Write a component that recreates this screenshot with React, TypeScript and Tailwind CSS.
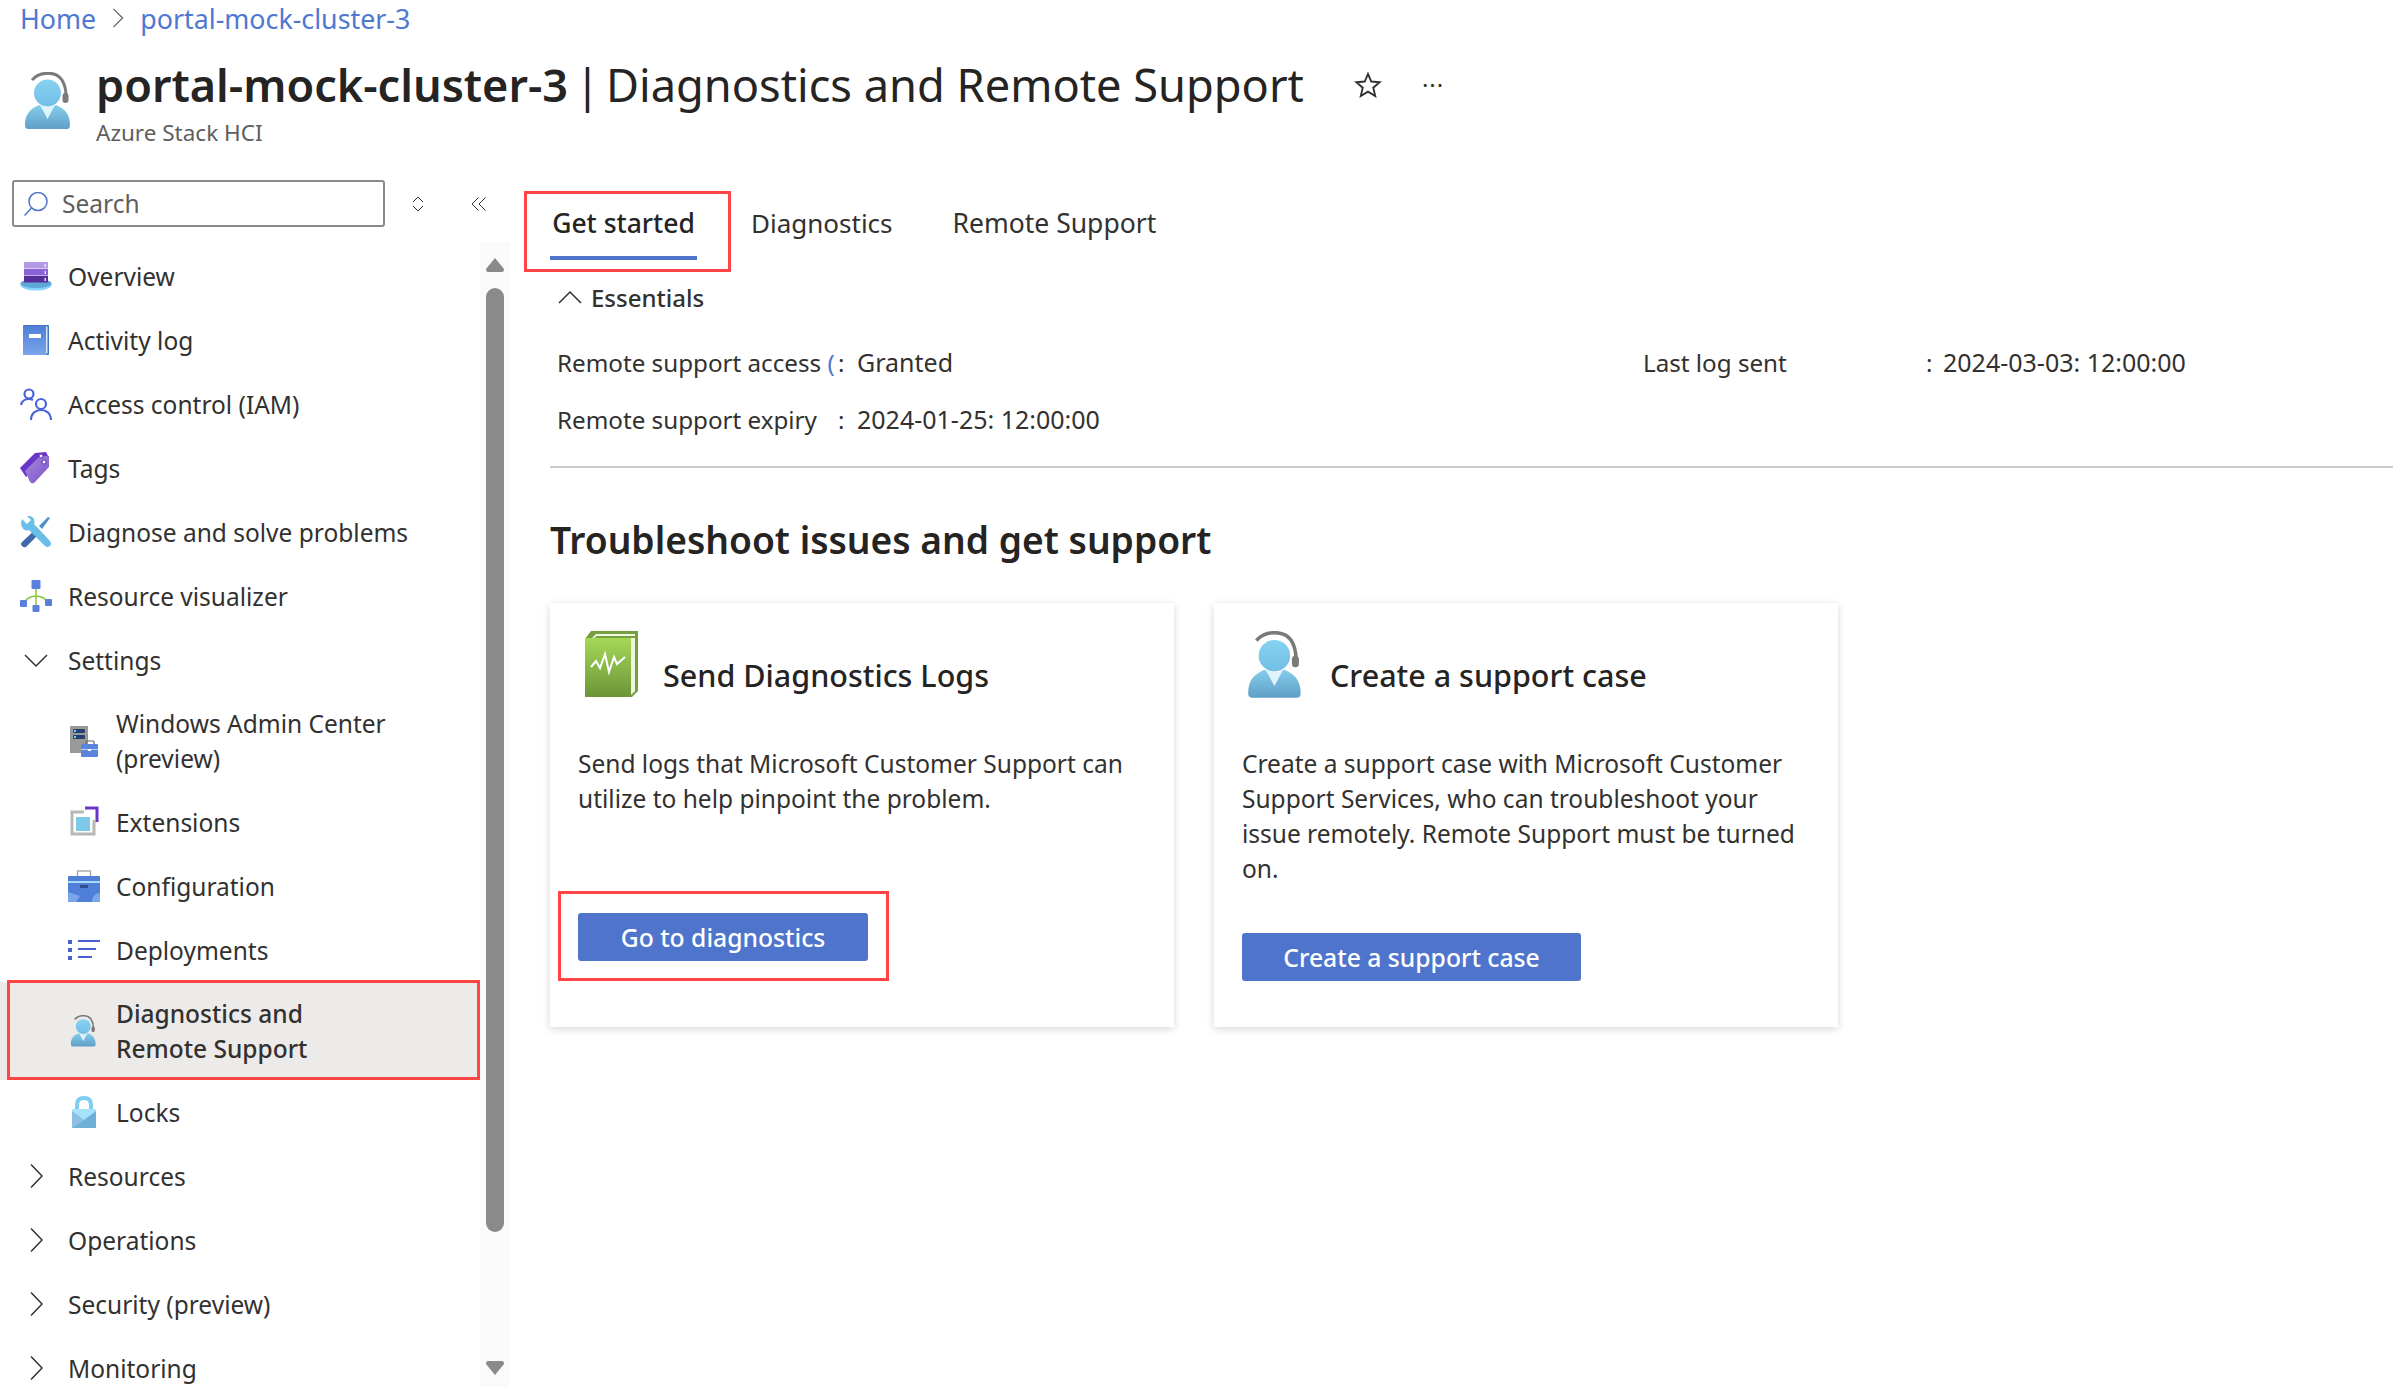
import React from "react";

type IconProps = { className?: string };

// person with headset, used in the header, the menu and the card
const SupportIcon = ({ className }: IconProps) => (
  <svg viewBox="0 0 48 58" className={className}>
    <defs>
      <linearGradient id="sp-head" x1="0" y1="0" x2="0" y2="1">
        <stop offset="0" stopColor="#86d2f2" />
        <stop offset="1" stopColor="#72bfe6" />
      </linearGradient>
      <linearGradient id="sp-body" x1="0" y1="0" x2="0" y2="1">
        <stop offset="0" stopColor="#86cdec" />
        <stop offset="1" stopColor="#5e9fc6" />
      </linearGradient>
    </defs>
    <path d="M8 8 C16 -1 32 -1 38 8 C41 13 42 18 42 24" fill="none" stroke="#7a7a7a" strokeWidth="3" />
    <rect x="38.5" y="21" width="6" height="10" rx="3" fill="#7a7a7a" />
    <circle cx="23.5" cy="21" r="13.5" fill="url(#sp-head)" />
    <path d="M1 53 C1 42 6 37 15 33 Q24 38 32 33 C41 37 46 42 46 53 Q46 57 43 57 L4 57 Q1 57 1 53Z" fill="url(#sp-body)" />
    <path d="M16 33 Q24 37 31 33 L23.5 47Z" fill="#e0f3fb" />
  </svg>
);

const BookIcon = ({ className }: IconProps) => (
  <svg viewBox="0 0 54 66" className={className}>
    <defs>
      <linearGradient id="bk-green" x1="0" y1="0" x2="0" y2="1">
        <stop offset="0" stopColor="#a5d857" />
        <stop offset="1" stopColor="#6c9438" />
      </linearGradient>
    </defs>
    <path d="M0 8 L6 0 L53 0 L53 60 L47 66 L0 66Z" fill="#76a03d" />
    <path d="M46 7 H50 V60 L46 64Z" fill="#eef6e0" />
    <rect x="0" y="7" width="46" height="59" fill="url(#bk-green)" />
    <path d="M7 7 L11 3 H50 V5 H12 L9 7Z" fill="#eef6e0" />
    <path d="M6 38 L11 32 L15 39 L20 25 L24 43 L29 28 L32 35 L40 28" transform="translate(0 -2)" fill="none" stroke="#fff" strokeWidth="2" />
  </svg>
);

const OverviewIcon = () => (
  <svg viewBox="0 0 32 32" className="h-8 w-8">
    <ellipse cx="16" cy="25" rx="15.5" ry="5.5" fill="#83d3fb" />
    <ellipse cx="16" cy="23.5" rx="15.5" ry="4.5" fill="#5ea7d6" />
    <rect x="4" y="2" width="24" height="6.5" fill="#b39ae6" />
    <rect x="4" y="9" width="24" height="6.5" fill="#8b63d9" />
    <rect x="4" y="16" width="24" height="6.5" fill="#553099" />
    <rect x="24.5" y="4" width="1.5" height="3" fill="#e6e0f5" />
    <rect x="24.5" y="11" width="1.5" height="3" fill="#e6e0f5" />
    <rect x="24.5" y="18" width="1.5" height="3" fill="#e6e0f5" />
  </svg>
);

const LogIcon = () => (
  <svg viewBox="0 0 32 32" className="h-8 w-8">
    <defs>
      <linearGradient id="log-blue" x1="0" y1="0" x2="0" y2="1">
        <stop offset="0" stopColor="#4f7fd6" />
        <stop offset="1" stopColor="#7ba6ea" />
      </linearGradient>
    </defs>
    <rect x="3" y="1" width="26" height="30" rx="1" fill="#4a74c4" />
    <path d="M26 2.5 H27.5 V29 L26 30Z" fill="#dbe7f8" />
    <rect x="3" y="2" width="23" height="29" fill="url(#log-blue)" />
    <rect x="9" y="10" width="12" height="4" fill="#fff" />
  </svg>
);

const IamIcon = () => (
  <svg viewBox="0 0 32 32" className="h-8 w-8" fill="none" stroke="#4a63d8" strokeWidth="2.2">
    <circle cx="9" cy="6" r="4.5" />
    <path d="M1 17 C2 12 6 11 9 11 C11 11 12 11.500 13 12" />
    <circle cx="21" cy="16" r="5" />
    <path d="M11 32 C11 25 16 22 21 22 C26 22 31 25 31 32" />
  </svg>
);

const TagIcon = () => (
  <svg viewBox="0 0 32 32" className="h-8 w-8">
    <defs>
      <linearGradient id="tag-p" x1="0" y1="0" x2="1" y2="1">
        <stop offset="0" stopColor="#a78bdc" />
        <stop offset="1" stopColor="#7a52c9" />
      </linearGradient>
    </defs>
    <path d="M0 16 L15 1 L26 0 L28 4 L6 25Z" fill="#6a35c9" />
    <path d="M5 19 L20 4 L29 4 L29 15 L14 31 Q12 32 10 30Z" fill="url(#tag-p)" />
    <circle cx="21" cy="4" r="2" fill="#fff" stroke="#5c2eb0" />
    <circle cx="24" cy="10" r="2" fill="#fff" stroke="#5c2eb0" />
  </svg>
);

const WrenchIcon = () => (
  <svg viewBox="0 0 32 32" className="h-8 w-8">
    <path d="M2 26 L17 12 L21 16 L6 31 Q4 32 2 30 Q0 28 2 26Z" fill="#3f6aa8" />
    <path d="M19 10 L28 1 L30 2 L22 13Z" fill="#4f8fc7" />
    <path d="M2 3 L7 8 L11 4 L7 0 C12 -1 16 3 14 8 L30 25 Q32 28 30 30 Q27 32 25 30 L9 14 C4 16 -1 10 2 3Z" fill="#68bfe8" />
  </svg>
);

const VisualizerIcon = () => (
  <svg viewBox="0 0 32 32" className="h-8 w-8">
    <path d="M16 9 V26 M5 24 C5 18 12 16 16 16 C20 16 27 18 27 24" fill="none" stroke="#8cc63f" strokeWidth="1.5" />
    <rect x="11.500" y="0" width="9" height="9" rx="1" fill="#5b80dc" />
    <rect x="0" y="20" width="7" height="7" rx="1" fill="#5b80dc" />
    <rect x="25" y="19" width="7" height="7" rx="1" fill="#5b80dc" />
    <rect x="12.500" y="25" width="7" height="7" rx="1" fill="#5b80dc" />
  </svg>
);

const AdminCenterIcon = () => (
  <svg viewBox="0 0 32 32" className="h-8 w-8">
    <rect x="2" y="1" width="18" height="27" fill="#9a9a9a" />
    <rect x="5" y="4" width="12" height="4" rx="1" fill="#24406e" />
    <rect x="5" y="10" width="12" height="4" rx="1" fill="#24406e" />
    <rect x="6" y="5" width="2" height="2" fill="#7fd0ee" />
    <rect x="6" y="11" width="2" height="2" fill="#7fd0ee" />
    <rect x="18" y="16" width="8" height="5" rx="1" fill="none" stroke="#666" strokeWidth="1.2" />
    <rect x="13" y="19" width="17" height="13" rx="1" fill="#5b84dc" />
    <rect x="13" y="24" width="17" height="1" fill="#b6d4f5" />
    <rect x="20" y="24" width="3" height="2" fill="#fff" />
  </svg>
);

const ExtensionsIcon = () => (
  <svg viewBox="0 0 32 32" className="h-8 w-8">
    <path d="M26 14 V28 H4 V6 H16" fill="none" stroke="#b8b8b8" strokeWidth="3" />
    <path d="M17 2 H29 V16" fill="none" stroke="#6a35c9" strokeWidth="3" />
    <rect x="8" y="11" width="14" height="14" fill="#7cc9ea" />
  </svg>
);

const ConfigIcon = () => (
  <svg viewBox="0 0 32 32" className="h-8 w-8">
    <rect x="9.500" y="1" width="13" height="7" fill="none" stroke="#aaa" strokeWidth="1.5" />
    <rect x="0" y="6" width="32" height="26" rx="1" fill="#4f7fd6" />
    <rect x="0" y="11" width="32" height="2" fill="#a8dcf5" />
    <path d="M0 22 L12 26 L8 32 H1 Q0 32 0 31Z M24 32 C24 27 27 23 32 23 V31 Q32 32 31 32Z" fill="#7ba6ea" />
    <rect x="12" y="15" width="8" height="3" fill="#2e4f8f" />
  </svg>
);

const DeploymentsIcon = () => (
  <svg viewBox="0 0 32 20" className="h-5 w-8" fill="#4a5fd6">
    <rect x="0" y="0" width="4" height="4" />
    <rect x="0" y="8" width="4" height="4" />
    <rect x="0" y="16" width="4" height="4" />
    <rect x="10" y="0" width="22" height="2" />
    <rect x="10" y="8" width="18" height="2" />
    <rect x="10" y="16" width="14" height="2" />
  </svg>
);

const LockIcon = () => (
  <svg viewBox="0 0 32 32" className="h-8 w-8">
    <path d="M9 15 V9 C9 4 12 2 16 2 C20 2 23 4 23 9 V15" fill="none" stroke="#7fcdf0" strokeWidth="4" />
    <rect x="4" y="13" width="24" height="19" rx="1" fill="#a5e3fb" />
    <path d="M4 15 L16 24 L4 32Z" fill="#8fbfe0" />
    <path d="M28 15 L16 24 L4 32 H28Z" fill="#6fb0d8" />
  </svg>
);

const Chevron = ({ d, className }: { d: string; className?: string }) => (
  <svg viewBox="0 0 24 24" className={className} fill="none" stroke="#323130" strokeWidth="1.5">
    <path d={d} />
  </svg>
);

const navItemClass = "flex h-16 items-center text-[#323130]";

const TopItem = ({ icon, label }: { icon: React.ReactNode; label: string }) => (
  <div className={navItemClass}>
    <div className="ml-5 flex w-12 items-center">{icon}</div>
    <span>{label}</span>
  </div>
);

const SubItem = ({ icon, label }: { icon: React.ReactNode; label: string }) => (
  <div className={navItemClass}>
    <div className="ml-[68px] flex w-12 items-center">{icon}</div>
    <span>{label}</span>
  </div>
);

const Group = ({ label, open }: { label: string; open?: boolean }) => (
  <div className={navItemClass}>
    <div className="ml-6 flex w-11 items-center">
      {open ? (
        <Chevron d="M1 7 L12 18 L23 7" className="h-6 w-6" />
      ) : (
        <Chevron d="M7 0.500 L18 12 L7 23.500" className="h-6 w-6" />
      )}
    </div>
    <span>{label}</span>
  </div>
);

function Sidebar() {
  return (
    <aside className="flex w-[510px] shrink-0 flex-col">
      <div className="mt-[10px] flex items-center">
        <div className="ml-3 flex h-[47px] w-[373px] items-center rounded-[3px] border-2 border-[#8a8a8a] pl-[10px] text-[#605e5c]">
          <svg viewBox="0 0 24 24" className="h-6 w-6" fill="none" stroke="#4f74cc" strokeWidth="1.5">
            <circle cx="14" cy="9.500" r="9" />
            <path d="M7.500 16 L0.500 23.500" />
          </svg>
          <span className="ml-[14px]">Search</span>
        </div>
        <svg viewBox="0 0 14 16" className="ml-[26px] h-4 w-[14px]" fill="none" stroke="#323130" strokeWidth="1">
          <path d="M2 6 L7 1 L12 6 M2 10 L7 15 L12 10" />
        </svg>
        <svg viewBox="0 0 16 14" className="ml-[46px] h-[14px] w-4" fill="none" stroke="#323130" strokeWidth="1">
          <path d="M7.500 0.500 L1 7 L7.500 13.500 M14.500 0.500 L8 7 L14.500 13.500" />
        </svg>
      </div>
      <div className="mt-[15px] flex min-h-0 flex-1">
        <nav className="w-[480px] pt-[2px]">
          <TopItem icon={<OverviewIcon />} label="Overview" />
          <TopItem icon={<LogIcon />} label="Activity log" />
          <TopItem icon={<IamIcon />} label="Access control (IAM)" />
          <TopItem icon={<TagIcon />} label="Tags" />
          <TopItem icon={<WrenchIcon />} label="Diagnose and solve problems" />
          <TopItem icon={<VisualizerIcon />} label="Resource visualizer" />
          <Group label="Settings" open />
          <div className="flex h-[98px] items-center text-[#323130]">
            <div className="ml-[68px] flex w-12 items-center"><AdminCenterIcon /></div>
            <span className="leading-[35px]">Windows Admin Center<br />(preview)</span>
          </div>
          <SubItem icon={<ExtensionsIcon />} label="Extensions" />
          <SubItem icon={<ConfigIcon />} label="Configuration" />
          <SubItem icon={<DeploymentsIcon />} label="Deployments" />
          <div className="relative flex h-[98px] items-center bg-[#edebe9] font-medium text-[#323130]">
            <div className="ml-[68px] flex w-12 items-center"><SupportIcon className="ml-[2px] h-8 w-[27px]" /></div>
            <span className="leading-[35px]">Diagnostics and<br />Remote Support</span>
            <div className="absolute -top-[2px] right-0 bottom-0 left-[7px] border-[3px] border-[#ff4545]" />
          </div>
          <SubItem icon={<LockIcon />} label="Locks" />
          <Group label="Resources" />
          <Group label="Operations" />
          <Group label="Security (preview)" />
          <Group label="Monitoring" />
        </nav>
        <div className="flex h-[1145px] w-[30px] flex-col items-center bg-[#fafafa] pt-4">
          <svg viewBox="0 0 18 14" className="h-[14px] w-[18px]" fill="#8a8a8a">
            <path d="M9 0 L18 11 Q18 14 16 14 H2 Q0 14 0 11Z" />
          </svg>
          <div className="mt-4 h-[944px] w-[18px] rounded-full bg-[#8a8a8a]" />
          <svg viewBox="0 0 18 14" className="mt-[129px] h-[14px] w-[18px]" fill="#8a8a8a">
            <path d="M9 14 L0 3 Q0 0 2 0 H16 Q18 0 18 3Z" />
          </svg>
        </div>
      </div>
    </aside>
  );
}

const Card = ({
  icon,
  title,
  titleGap,
  body,
  action,
  actionGap,
  actionWidth,
  outlined,
}: {
  icon: React.ReactNode;
  title: string;
  titleGap: string;
  body: React.ReactNode;
  action: string;
  actionGap: string;
  actionWidth: string;
  outlined?: boolean;
}) => (
  <div className="flex h-[424px] w-[624px] flex-col bg-white px-7 pt-7 shadow-[0_2px_8px_rgba(0,0,0,0.16)]">
    <div className="flex h-[70px]">
      {icon}
      <h3 className={`mt-[23px] text-[30.500px] leading-[42px] font-medium text-[#252423] ${titleGap}`}>{title}</h3>
    </div>
    <p className="mt-[45px] text-[24.500px] leading-[35px] text-[#323130]">{body}</p>
    <div className={`relative ${actionGap} ${actionWidth}`}>
      <button className="flex h-[48px] w-full items-center justify-center rounded-[3px] bg-[#4f74cc] text-[24.700px] font-medium text-white">
        {action}
      </button>
      {outlined && <div className="absolute -top-[22px] -right-[21px] -bottom-[20px] -left-[20px] border-[3px] border-[#ff4545]" />}
    </div>
  </div>
);

function Main() {
  return (
    <main className="min-w-0 flex-1 pl-10">
      <div className="mt-[18px] flex h-[72px] items-start text-[26.500px]">
        <div className="relative flex h-[72px] w-[147px] items-center justify-center border-b-4 border-[#4f74cc] pt-[2px] font-medium whitespace-nowrap text-[#252423]">
          Get started
          <div className="absolute top-[3px] -right-[34px] -bottom-[16px] -left-[26px] border-[3px] border-[#ff4545]" />
        </div>
        <span className="ml-[54px] flex h-[68px] items-center pt-[2px] text-[26px] text-[#323130]">Diagnostics</span>
        <span className="ml-[60px] flex h-[68px] items-center pt-[2px] text-[#323130]">Remote Support</span>
      </div>

      <div className="mt-[18px] flex h-[38px] items-center pl-2">
        <Chevron d="M1 18 L12 7 L23 18" className="h-6 w-6" />
        <span className="ml-[9px] text-[24px] font-medium text-[#323130]">Essentials</span>
      </div>

      <div className="mt-[26px] flex pl-[7px] text-[24.200px] text-[#323130]">
        <div className="w-[1086px]">
          <div className="flex h-10 items-center whitespace-nowrap">
            <span className="w-[281px]">Remote support access <span className="text-[#4f74cc]">(</span></span>
            <span className="w-[19px]">:</span>
            <span className="text-[25px]">Granted</span>
          </div>
          <div className="mt-[17px] flex h-10 items-center">
            <span className="w-[281px]">Remote support expiry</span>
            <span className="w-[19px]">:</span>
            <span className="text-[25px]">2024-01-25: 12:00:00</span>
          </div>
        </div>
        <div className="flex h-10 items-center">
          <span className="w-[283px]">Last log sent</span>
          <span className="w-[17px]">:</span>
          <span className="text-[25px]">2024-03-03: 12:00:00</span>
        </div>
      </div>

      <div className="mt-[27px] h-[2px] bg-[#cccccc]" />

      <h2 className="mt-[47px] text-[37.200px] leading-[50px] font-semibold text-[#252423]">Troubleshoot issues and get support</h2>

      <div className="mt-[38px] flex gap-10">
        <Card
          icon={<BookIcon className="ml-[7px] h-[66px] w-[54px]" />}
          title="Send Diagnostics Logs"
          titleGap="ml-6"
          body={<>Send logs that Microsoft Customer Support can<br />utilize to help pinpoint the problem.</>}
          action="Go to diagnostics"
          actionGap="mt-[97px]"
          actionWidth="w-[290px]"
          outlined
        />
        <Card
          icon={<SupportIcon className="ml-[5px] h-[68px] w-[56px]" />}
          title="Create a support case"
          titleGap="ml-[27px]"
          body={<>Create a support case with Microsoft Customer<br />Support Services, who can troubleshoot your<br />issue remotely. Remote Support must be turned<br />on.</>}
          action="Create a support case"
          actionGap="mt-[47px]"
          actionWidth="w-[339px]"
        />
      </div>
    </main>
  );
}

export default function App() {
  return (
    <div className="flex h-[1387px] w-[2393px] flex-col overflow-hidden bg-white font-['Noto_Sans',sans-serif] text-[24.500px] leading-[35px]">
      <header className="h-[170px] shrink-0">
        <div className="flex h-9 items-center pl-5 text-[26.800px] text-[#4f78d1]">
          <span>Home</span>
          <svg viewBox="0 0 12 22" className="mx-[16px] h-5 w-3" fill="none" stroke="#605e5c" strokeWidth="1.300">
            <path d="M1 1 L11 11 L1 21" />
          </svg>
          <span>portal-mock-cluster-3</span>
        </div>
        <div className="flex pl-6 pt-[16px]">
          <SupportIcon className="mt-[20px] h-[58px] w-[48px]" />
          <div className="ml-6">
            <div className="flex h-[66px] items-center">
              <h1 className="text-[45.200px] leading-[66px] text-[#252423]">
                <span className="text-[45px] font-semibold">portal-mock-cluster-3</span>
                <span className="mr-[6px] ml-[7px]">|</span>
                Diagnostics and Remote Support
              </h1>
              <svg viewBox="0 0 24 24" className="ml-[50px] h-7 w-7" fill="none" stroke="#323130" strokeWidth="1.6">
                <path d="M12 2.500 L14.800 9 L22 9.600 L16.500 14.300 L18.200 21.500 L12 17.700 L5.800 21.500 L7.500 14.300 L2 9.600 L9.200 9Z" />
              </svg>
              <span className="ml-[40px] mt-[-1px] text-[24px] tracking-[1px] text-[#323130]">···</span>
            </div>
            <div className="-mt-[1px] text-[22.500px] leading-[32px] text-[#605e5c]">Azure Stack HCI</div>
          </div>
        </div>
      </header>
      <div className="flex min-h-0 flex-1">
        <Sidebar />
        <Main />
      </div>
    </div>
  );
}
